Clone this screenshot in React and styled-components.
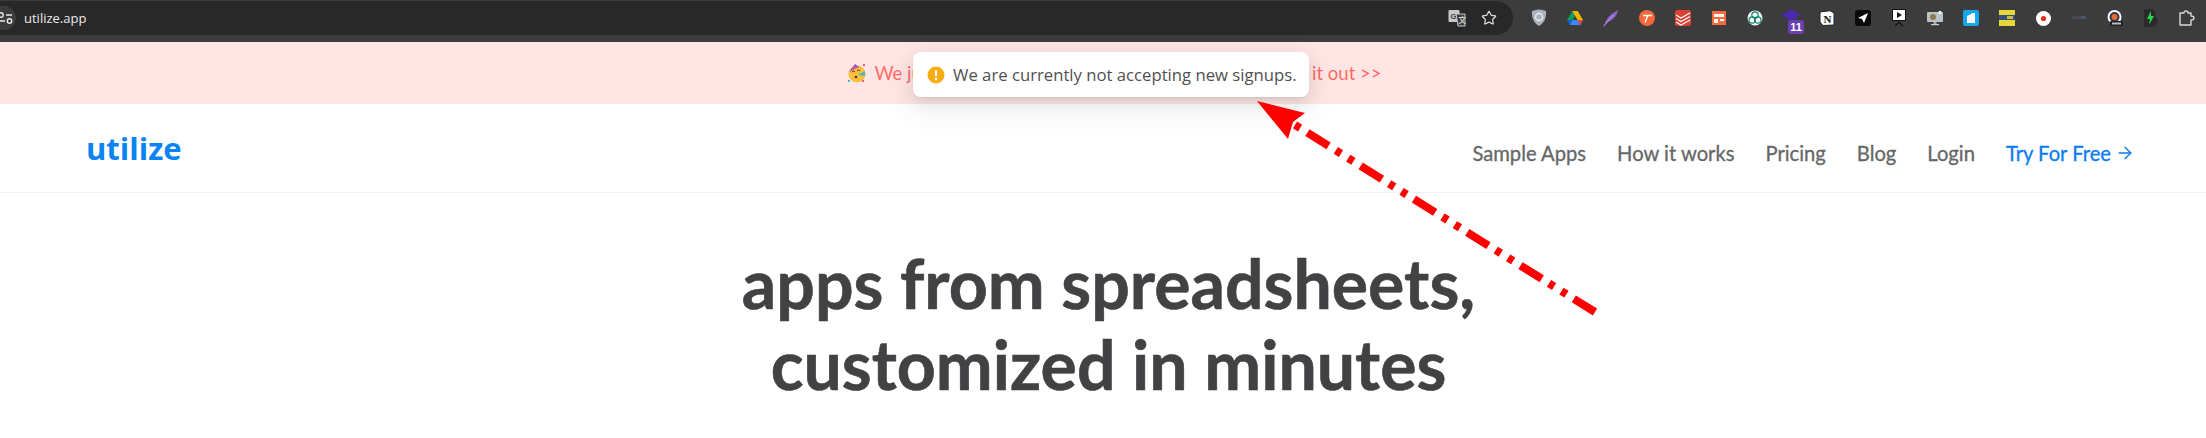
import React from 'react';
import styled, { createGlobalStyle } from 'styled-components';
import { ArrowRight, Star } from 'lucide-react';

const GlobalStyle = createGlobalStyle`
  html, body {
    margin: 0;
    padding: 0;
    background: #fff;
  }
`;

const Page = styled.div`
  position: relative;
  width: 2206px;
  height: 438px;
  overflow: hidden;
  background: #fff;
  font-family: Lato, "Liberation Sans", sans-serif;
`;

const Chrome = styled.div`
  display: flex;
  align-items: flex-start;
  height: 42px;
  padding-top: 1px;
  box-sizing: border-box;
  background: #3c3c3c;
`;

const Omnibox = styled.div`
  display: flex;
  align-items: center;
  flex: 0 0 1513px;
  height: 34px;
  padding-right: 8px;
  box-sizing: border-box;
  background: #282828;
  border-radius: 0 17px 17px 0;
  overflow: hidden;
`;

const SiteInfo = styled.div`
  display: flex;
  align-items: center;
  justify-content: flex-end;
  flex: none;
  width: 16px;
  height: 24px;
  border-radius: 0 12px 12px 0;
  background: #3c3c3c;
`;

const Url = styled.span`
  flex: 1;
  margin-left: 8px;
  color: #e8eaed;
  font: 13px "Open Sans", sans-serif;
`;

const OmniButton = styled.div`
  display: flex;
  align-items: center;
  justify-content: center;
  flex: none;
  width: 32px;
  height: 32px;
`;

const Extensions = styled.div`
  display: flex;
  margin-left: 8px;
`;

const Extension = styled.div`
  position: relative;
  display: flex;
  align-items: center;
  justify-content: center;
  width: 36px;
  height: 34px;
`;

const CountBadge = styled.span`
  position: absolute;
  right: 5px;
  bottom: 1px;
  width: 16px;
  height: 14px;
  border-radius: 3px;
  background: #6a3fb5;
  color: #fff;
  font: bold 11px/14px "Liberation Sans", sans-serif;
  text-align: center;
`;

const Banner = styled.div`
  display: flex;
  align-items: center;
  justify-content: center;
  gap: 8px;
  height: 61px;
  padding-left: 22px;
  background: #ffe6e4;
  border-bottom: 1px solid #f8e9e8;
  color: #ff6b66;
  font-size: 18.5px;
`;

const Nav = styled.nav`
  display: flex;
  align-items: center;
  justify-content: space-between;
  height: 88px;
  padding: 0 71px 0 86px;
  border-bottom: 1px solid #f1f1f1;
`;

const Logo = styled.div`
  color: #0a84f5;
  font: 700 31px "Open Sans", sans-serif;
`;

const NavLinks = styled.div`
  display: flex;
  align-items: center;
  gap: 31px;
  margin-top: 9px;
`;

const NavLink = styled.a`
  display: flex;
  align-items: center;
  gap: 4px;
  color: ${(props) => (props.$accent ? '#0a7cf0' : '#666666')};
  font-size: 20.2px;
  -webkit-text-stroke: 0.3px currentColor;
`;

const Hero = styled.h1`
  margin: 0;
  padding: 49px 0 0 11px;
  color: #424244;
  font-size: 68px;
  font-weight: 700;
  line-height: 81px;
  text-align: center;
  -webkit-text-stroke: 0.6px currentColor;
`;

const Toast = styled.div`
  position: absolute;
  left: 913px;
  top: 52px;
  display: flex;
  align-items: center;
  gap: 8px;
  width: 396px;
  height: 45px;
  padding-left: 14px;
  box-sizing: border-box;
  border-radius: 8px;
  background: #fff;
  box-shadow: 0 6px 16px 0 rgba(0, 0, 0, 0.08), 0 3px 6px -4px rgba(0, 0, 0, 0.12), 0 9px 28px 8px rgba(0, 0, 0, 0.05);
  color: #505050;
  font: 16.7px "Open Sans", sans-serif;
`;

const ArrowLayer = styled.svg`
  position: absolute;
  left: 0;
  top: 0;
  pointer-events: none;
`;

const PartyFace = () => (
  <svg width="20" height="20" viewBox="0 0 20 20">
    <circle cx="10" cy="11" r="8.5" fill="#fbbf3c" />
    <path d="M2 9 L8 1 L12 4 Z" fill="#7a5bd6" />
    <path d="M4 6 L9 3 M3 8 L10 4" stroke="#f05a8c" strokeWidth="1" />
    <path d="M5 9 q2 -2 3 0 M10 8 q2 -2 3 0" stroke="#5a3a1e" strokeWidth="1" fill="none" />
    <circle cx="9" cy="14" r="1.3" fill="#5a3a1e" />
    <path d="M11 12 L18 8 L18 13 Z" fill="#4ab3c9" />
    <rect x="16" y="1" width="2" height="2" fill="#f05a8c" />
    <rect x="1" y="17" width="2" height="2" fill="#4ab3c9" />
    <rect x="15" y="17" width="2" height="2" fill="#f05a8c" />
  </svg>
);

const WarningIcon = () => (
  <svg width="18" height="18" viewBox="0 0 18 18">
    <circle cx="9" cy="9" r="8.5" fill="#faad14" />
    <rect x="8" y="4" width="2" height="6.5" rx="1" fill="#fff" />
    <circle cx="9" cy="13" r="1.2" fill="#fff" />
  </svg>
);

const TuneIcon = () => (
  <svg width="16" height="16" viewBox="0 0 16 16" fill="none" stroke="#e8e8e8" strokeWidth="1.4">
    <circle cx="1" cy="5" r="2.2" />
    <path d="M6 5 H12" />
    <circle cx="9.5" cy="11" r="2.2" />
    <path d="M-1 11 H5" />
  </svg>
);

const TranslateIcon = () => (
  <svg width="18" height="18" viewBox="0 0 18 18">
    <rect x="0.5" y="1" width="11" height="12" rx="1" fill="#c8c8c8" />
    <text x="2.5" y="10" fontSize="8" fontWeight="700" fontFamily="Liberation Sans" fill="#3c3c3c">G</text>
    <path d="M8 5 H17 V17 H10 Z" fill="#3c3c3c" stroke="#c8c8c8" strokeWidth="1" />
    <text x="10.2" y="14" fontSize="8" fontWeight="700" fontFamily="Noto Sans CJK SC" fill="#c8c8c8">文</text>
  </svg>
);

const ShieldIcon = () => (
  <svg width="16" height="18" viewBox="0 0 16 18">
    <path d="M1 2 Q8 -1 15 2 Q16 12 8 17 Q0 12 1 2 Z" fill="#a9b1bd" />
    <circle cx="8" cy="8" r="3.6" fill="none" stroke="#e4e7ec" strokeWidth="1.6" />
  </svg>
);

const DriveIcon = () => (
  <svg width="16" height="14" viewBox="0 0 16 14">
    <path d="M5.3 0 H10.7 L8 5 L5.5 9 H0 Z" fill="#0f9d58" />
    <path d="M5.3 0 H10.7 L16 9 H10.6 Z" fill="#f4b400" />
    <path d="M2.7 14 L5.4 9 H16 L13.3 14 Z" fill="#4285f4" />
    <path d="M0 9 H5.4 L2.7 14 Z" fill="#0066da" />
    <path d="M10.6 9 H16 L13.3 14 Z" fill="#db4437" />
  </svg>
);

const FeatherIcon = () => (
  <svg width="16" height="18" viewBox="0 0 16 18">
    <path d="M1 17 Q3 7 15 1 Q14 9 5 13 Z" fill="#8a63c9" />
    <path d="M0.5 17.5 L10 6" stroke="#c4a9ea" strokeWidth="0.8" />
  </svg>
);

const TIcon = () => (
  <svg width="16" height="16" viewBox="0 0 16 16">
    <circle cx="8" cy="8" r="8" fill="#f4683a" />
    <path d="M4 5.5 H13 M8.8 5.5 L6 12.5" stroke="#fff" strokeWidth="1.5" fill="none" />
  </svg>
);

const TodoistIcon = () => (
  <svg width="16" height="16" viewBox="0 0 16 16">
    <rect width="16" height="16" rx="2.5" fill="#db4035" />
    <path d="M1 5 L6 8 L15 3 M1 8.5 L6 11.5 L15 6.5 M1 12 L6 15 L15 10" stroke="#fff" strokeWidth="1.2" fill="none" />
  </svg>
);

const LayoutIcon = () => (
  <svg width="14" height="14" viewBox="0 0 14 14">
    <rect width="14" height="14" fill="#fb6b3c" />
    <rect x="2" y="3" width="10" height="3" fill="#fff" />
    <rect x="2" y="8" width="4" height="4" fill="#fff" />
    <rect x="8" y="8" width="4" height="2" fill="#fff" />
  </svg>
);

const KnotIcon = () => (
  <svg width="16" height="16" viewBox="0 0 16 16" fill="none" strokeWidth="1.2">
    <circle cx="8" cy="8" r="7.5" fill="#f2f8f6" stroke="none" />
    <circle cx="8" cy="5" r="3.2" stroke="#12806a" />
    <circle cx="5.2" cy="10" r="3.2" stroke="#12806a" />
    <circle cx="10.8" cy="10" r="3.2" stroke="#12806a" />
  </svg>
);

const DiamondIcon = () => (
  <svg width="18" height="14" viewBox="0 0 18 14" style={{ marginBottom: 5 }}>
    <path d="M9 0 L18 6 L9 12 L0 6 Z" fill="#4a2ab0" />
  </svg>
);

const NotionIcon = () => (
  <svg width="16" height="16" viewBox="0 0 16 16">
    <path d="M1 2 L11 0.7 L15 3 V15 L4 15.5 L1 12 Z" fill="#fff" stroke="#222" strokeWidth="1" />
    <text x="4.6" y="13" fontSize="11" fontWeight="700" fontFamily="Liberation Serif" fill="#111">N</text>
  </svg>
);

const PlaneIcon = () => (
  <svg width="16" height="16" viewBox="0 0 16 16">
    <rect width="16" height="16" rx="3" fill="#0a0a0a" />
    <path d="M13 3 L3 8 L7 9 L9 13 Z" fill="#fff" />
  </svg>
);

const ScreenIcon = () => (
  <svg width="14" height="18" viewBox="0 0 14 18">
    <rect x="0.5" y="0.5" width="13" height="11" fill="#fff" stroke="#111" />
    <path d="M5 3 L10 6 L5 9 Z" fill="#111" />
    <path d="M3 17 L7 13 L11 17" stroke="#111" strokeWidth="1.2" fill="none" />
  </svg>
);

const MonitorIcon = () => (
  <svg width="16" height="16" viewBox="0 0 16 16">
    <rect y="2" width="16" height="10" rx="1" fill="#b9c3cc" />
    <circle cx="6" cy="7" r="3" fill="#8f7a4b" />
    <circle cx="13" cy="2.5" r="1.7" fill="#eee" />
    <rect x="6.5" y="12" width="3" height="2" fill="#aaa" />
    <rect x="4" y="14" width="8" height="1.2" fill="#ccc" />
  </svg>
);

const CyanIcon = () => (
  <svg width="16" height="16" viewBox="0 0 16 16">
    <rect width="16" height="16" rx="2" fill="#14a7ee" />
    <path d="M4 6 L10 3 H12 V13 H4 Z" fill="#fff" />
  </svg>
);

const YellowIcon = () => (
  <svg width="16" height="16" viewBox="0 0 16 16">
    <rect width="16" height="16" fill="#e6d736" />
    <rect y="5" width="16" height="5" fill="#34507a" />
    <rect x="8" y="6" width="6" height="3" fill="#c9b94a" />
  </svg>
);

const RecordIcon = () => (
  <svg width="15" height="15" viewBox="0 0 15 15">
    <circle cx="7.5" cy="7.5" r="7.5" fill="#fff" />
    <circle cx="7.5" cy="7.5" r="2.6" fill="#e52b1e" />
  </svg>
);

const SmearIcon = () => (
  <svg width="14" height="4" viewBox="0 0 14 4">
    <rect width="5" height="3" fill="#4a4a55" />
    <rect x="5" width="4" height="3" fill="#54454a" />
    <rect x="9" width="5" height="3" fill="#46556a" />
  </svg>
);

const ProIcon = () => (
  <svg width="16" height="16" viewBox="0 0 16 16">
    <circle cx="7.5" cy="7" r="7" fill="#fff" />
    <circle cx="7.5" cy="7" r="5" fill="#2c3a55" />
    <circle cx="7.5" cy="7" r="3" fill="#ee6a2c" />
    <rect x="3" y="11" width="13" height="5" rx="1" fill="#222" />
    <rect x="5" y="12.5" width="9" height="2" fill="#bbb" />
  </svg>
);

const BoltIcon = () => (
  <svg width="16" height="18" viewBox="0 0 16 18">
    <path d="M1 0 H9 Q14 1 12 8 Q16 10 14 15 Q12 18 8 18 H1 Z" fill="#2a2a2a" />
    <path d="M8 2 L4 10 H7 L6 16 L11 7 H8 Z" fill="#22d94a" />
  </svg>
);

const PuzzleIcon = () => (
  <svg width="16" height="16" viewBox="0 0 16 16" fill="none" stroke="#d8d8d8" strokeWidth="1.4">
    <path d="M1 3 H5 Q5 1 7 1 Q9 1 9 3 H12 V6 Q15 6 15 8 Q15 10 12 10 V15 H1 Z" strokeLinejoin="round" />
  </svg>
);

const extensions = [
  { id: 'shield', Icon: ShieldIcon },
  { id: 'drive', Icon: DriveIcon },
  { id: 'feather', Icon: FeatherIcon },
  { id: 't', Icon: TIcon },
  { id: 'todoist', Icon: TodoistIcon },
  { id: 'layout', Icon: LayoutIcon },
  { id: 'knot', Icon: KnotIcon },
  { id: 'diamond', Icon: DiamondIcon, badge: '11' },
  { id: 'notion', Icon: NotionIcon },
  { id: 'plane', Icon: PlaneIcon },
  { id: 'screen', Icon: ScreenIcon },
  { id: 'monitor', Icon: MonitorIcon },
  { id: 'cyan', Icon: CyanIcon },
  { id: 'yellow', Icon: YellowIcon },
  { id: 'record', Icon: RecordIcon },
  { id: 'smear', Icon: SmearIcon },
  { id: 'pro', Icon: ProIcon },
  { id: 'bolt', Icon: BoltIcon },
  { id: 'puzzle', Icon: PuzzleIcon },
];

const links = ['Sample Apps', 'How it works', 'Pricing', 'Blog', 'Login'];

const App = () => (
  <Page>
    <GlobalStyle />
    <Chrome>
      <Omnibox>
        <SiteInfo>
          <TuneIcon />
        </SiteInfo>
        <Url>utilize.app</Url>
        <OmniButton>
          <TranslateIcon />
        </OmniButton>
        <OmniButton>
          <Star size={16} color="#dcdcdc" strokeWidth={1.8} />
        </OmniButton>
      </Omnibox>
      <Extensions>
        {extensions.map(({ id, Icon, badge }) => (
          <Extension key={id}>
            <Icon />
            {badge && <CountBadge>{badge}</CountBadge>}
          </Extension>
        ))}
      </Extensions>
    </Chrome>
    <Banner>
      <PartyFace />
      <span>We just launched our new sample apps gallery. Check it out &gt;&gt;</span>
    </Banner>
    <Nav>
      <Logo>utilize</Logo>
      <NavLinks>
        {links.map((link) => (
          <NavLink key={link}>{link}</NavLink>
        ))}
        <NavLink $accent>
          Try For Free
          <ArrowRight size={20} strokeWidth={1.6} />
        </NavLink>
      </NavLinks>
    </Nav>
    <Hero>
      apps from spreadsheets,
      <br />
      customized in minutes
    </Hero>
    <Toast>
      <WarningIcon />
      We are currently not accepting new signups.
    </Toast>
    <ArrowLayer width="2206" height="438" viewBox="0 0 2206 438">
      <line x1="1595" y1="312" x2="1292" y2="123" stroke="#ff0000" strokeWidth="8" strokeDasharray="25 8.6 6 8.6 6 8.6" />
      <polygon points="1257,101 1305,113 1293,122 1288,139" fill="#ff0000" />
    </ArrowLayer>
  </Page>
);

export default App;
